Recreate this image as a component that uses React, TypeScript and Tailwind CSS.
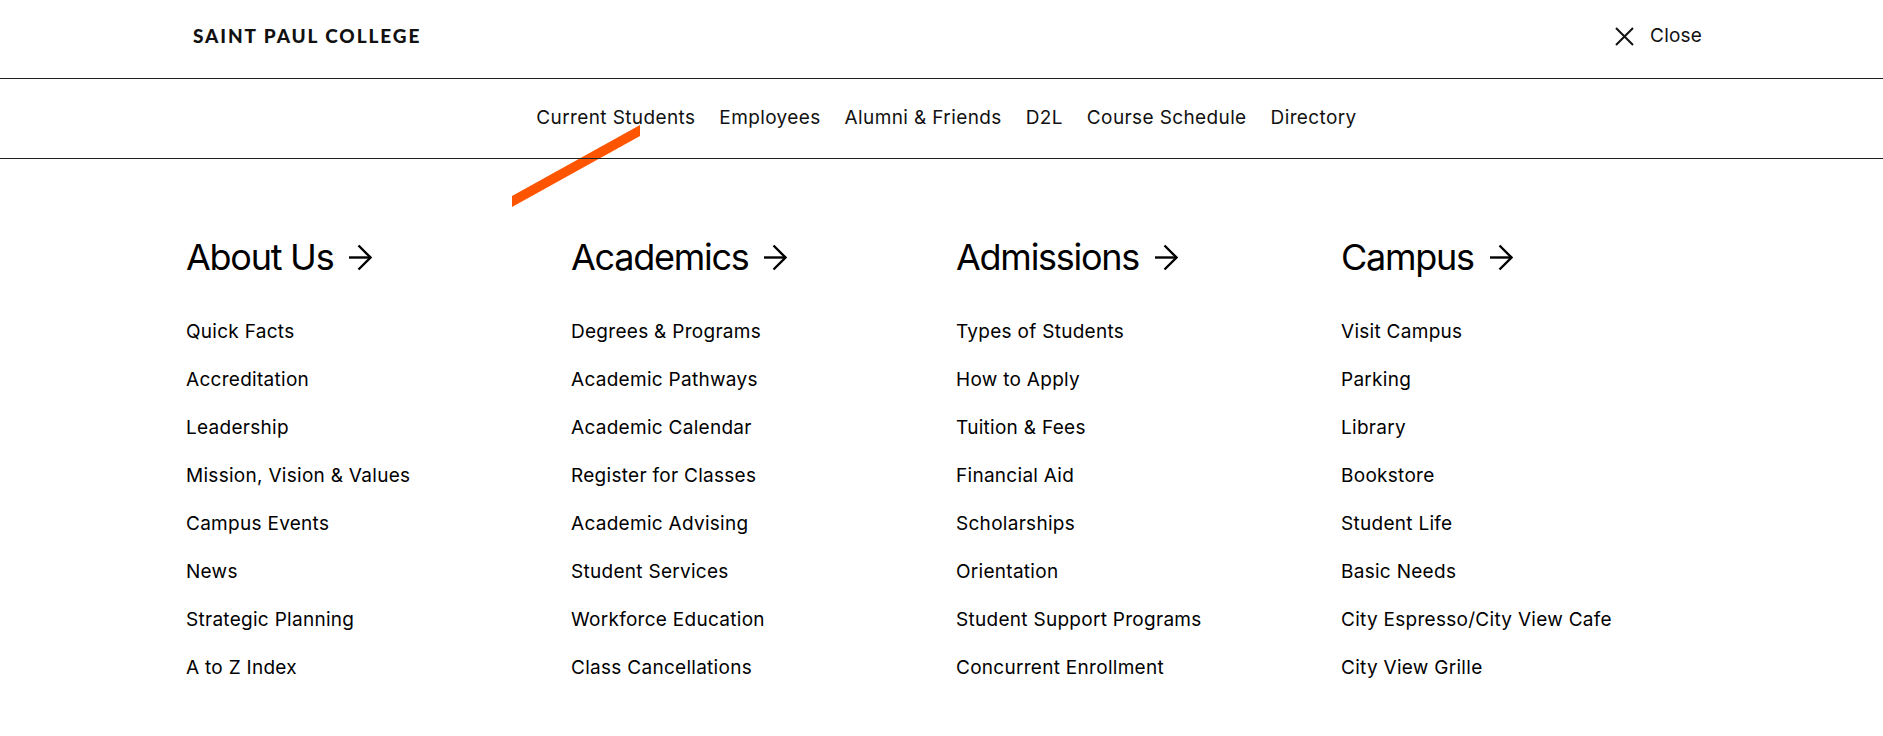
import React from 'react';

const columns = [
  {
    title: 'About Us',
    links: ['Quick Facts', 'Accreditation', 'Leadership', 'Mission, Vision & Values', 'Campus Events', 'News', 'Strategic Planning', 'A to Z Index'],
  },
  {
    title: 'Academics',
    links: ['Degrees & Programs', 'Academic Pathways', 'Academic Calendar', 'Register for Classes', 'Academic Advising', 'Student Services', 'Workforce Education', 'Class Cancellations'],
  },
  {
    title: 'Admissions',
    links: ['Types of Students', 'How to Apply', 'Tuition & Fees', 'Financial Aid', 'Scholarships', 'Orientation', 'Student Support Programs', 'Concurrent Enrollment'],
  },
  {
    title: 'Campus',
    links: ['Visit Campus', 'Parking', 'Library', 'Bookstore', 'Student Life', 'Basic Needs', 'City Espresso/City View Cafe', 'City View Grille'],
  },
];

const navLinks = ['Current Students', 'Employees', 'Alumni & Friends', 'D2L', 'Course Schedule', 'Directory'];

function ArrowRight() {
  return (
    <svg width="23" height="27" viewBox="0 0 23 27" fill="none" stroke="currentColor" strokeWidth={2.4}>
      <path d="M0 13.5H21.5" />
      <path d="M9.5 1.5L21.5 13.5L9.5 25.5" />
    </svg>
  );
}

export default function App() {
  return (
    <div className="relative min-h-[736px] bg-white text-black font-['Inter',sans-serif]">
      {/* Decorative slash */}
      <svg
        className="absolute left-[512px] top-[125px] z-0"
        width="128"
        height="82"
        viewBox="0 0 128 82"
      >
        <polygon points="0,71 128,0 128,11 0,82" fill="#ff5500" />
      </svg>

      {/* Top bar */}
      <header className="relative z-10 h-[79px] border-b border-[#1e2226]">
        <div className="mx-auto flex h-full w-[1511px] items-center justify-between pb-[6px]">
          <span className="pl-[7px] font-['Lato',sans-serif] text-[19px] font-black tracking-[0.1em] text-[#111]">
            SAINT PAUL COLLEGE
          </span>
          <button className="-mr-[5px] flex items-center gap-[16px] text-[19px] tracking-[0.01em] text-[#111]">
            <svg width="19" height="19" viewBox="0 0 19 19" fill="none" stroke="currentColor" strokeWidth={2}>
              <path d="M1 1L18 18M18 1L1 18" />
            </svg>
            <span>Close</span>
          </button>
        </div>
      </header>

      {/* Quick links */}
      <nav className="relative z-10 flex h-[80px] items-center justify-center gap-[24px] border-b border-[#1e2226] pl-[10px] pb-[1px] text-[19px] tracking-[0.02em] text-[#111]">
        {navLinks.map((l) => (
          <a key={l} href="#">
            {l}
          </a>
        ))}
      </nav>

      {/* Mega menu */}
      <div className="relative z-10 mx-auto grid w-[1511px] grid-cols-4 gap-x-[29px] pt-[77px]">
        {columns.map((col) => (
          <div key={col.title}>
            <a href="#" className="flex items-center gap-[16px] text-[36px] leading-[43px] tracking-[-0.035em]">
              <span>{col.title}</span>
              <ArrowRight />
            </a>
            <ul className="mt-[41px] flex flex-col gap-[24px] text-[19px] leading-[24px] tracking-[0.015em]">
              {col.links.map((link) => (
                <li key={link}>
                  <a href="#">{link}</a>
                </li>
              ))}
            </ul>
          </div>
        ))}
      </div>
    </div>
  );
}
